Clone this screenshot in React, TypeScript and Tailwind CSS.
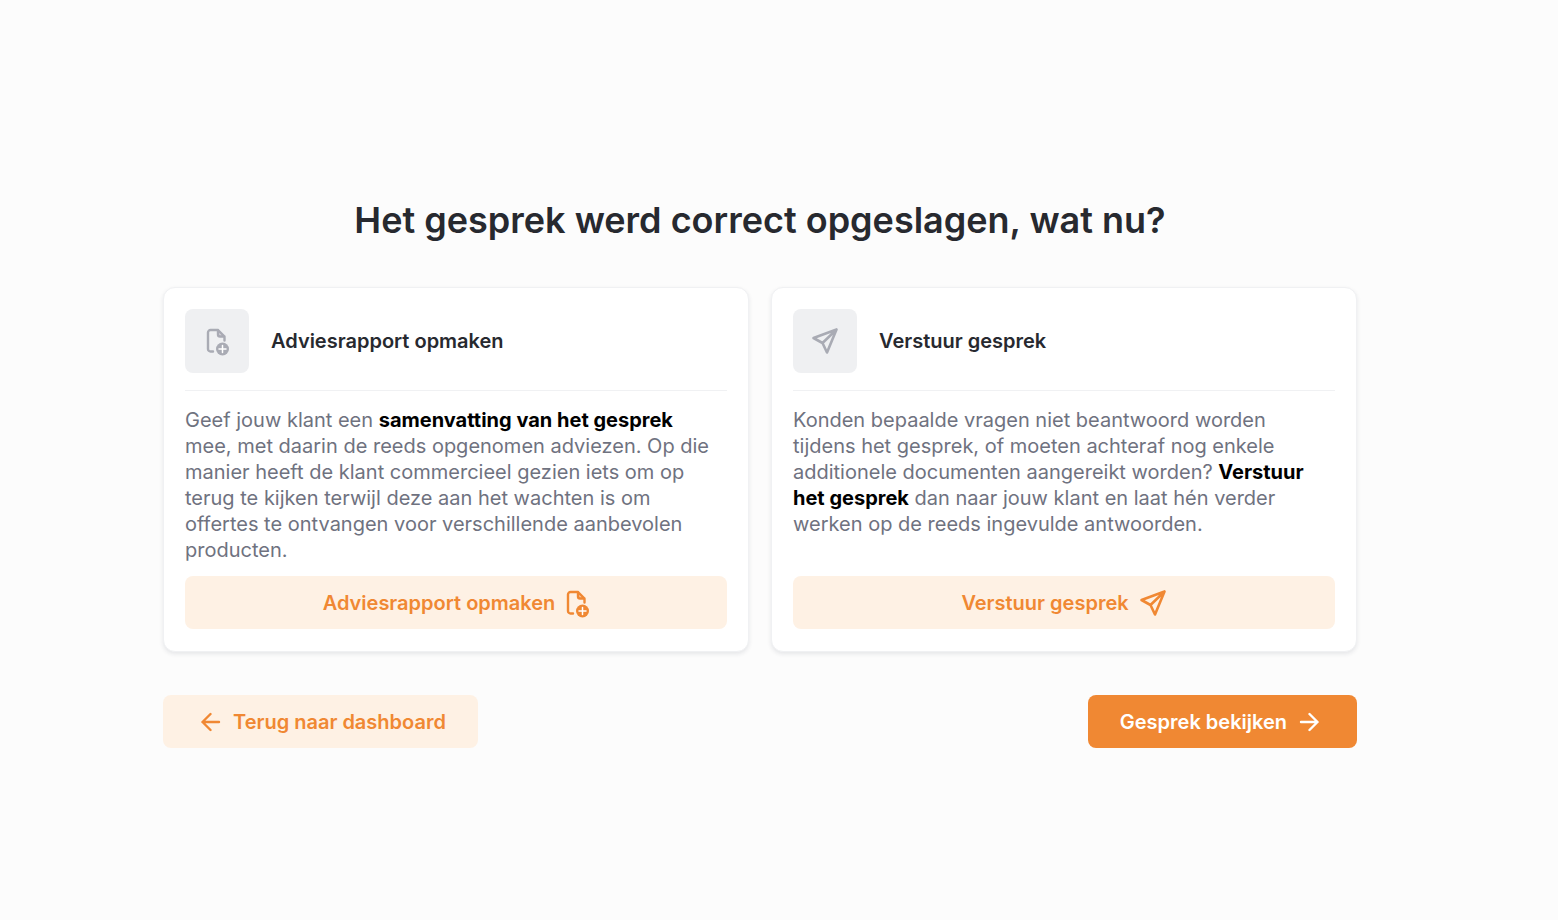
import React from "react";

const FileAddIcon = ({ className }: { className?: string }) => (
    <svg
        xmlns="http://www.w3.org/2000/svg"
        fill="none"
        viewBox="-1 -2 24 30"
        className={className}
        aria-hidden="true"
    >
        <path
            strokeLinecap="round"
            strokeLinejoin="round"
            strokeWidth="2.4"
            stroke="currentColor"
            d="M7 23.500H4.500A2.500 2.500 0 0 1 2 21V4.500A2.500 2.500 0 0 1 4.500 2H12l6.500 6.500v4M12 2v4.500a2 2 0 0 0 2 2h4.500"
        />
        <path d="M12 2v6.500h6.500z" fill="currentColor" fillOpacity="0.4" />
        <circle cx="16.500" cy="21" r="6.500" fill="currentColor" />
        <path
            strokeLinecap="round"
            strokeWidth="1.5"
            stroke="#fff"
            d="M16.500 17.500v7M13 21h7"
        />
    </svg>
);

const SendIcon = ({ className }: { className?: string }) => (
    <svg
        xmlns="http://www.w3.org/2000/svg"
        fill="none"
        viewBox="0 0 28 28"
        strokeWidth="2.6"
        stroke="currentColor"
        strokeLinecap="round"
        strokeLinejoin="round"
        className={className}
        aria-hidden="true"
    >
        <path d="M25.500 2.500 2.500 11l9 5 4.500 9.500zM25.500 2.500 11.500 16" />
    </svg>
);

const ArrowIcon = ({ className }: { className?: string }) => (
    <svg
        xmlns="http://www.w3.org/2000/svg"
        fill="none"
        viewBox="0 0 20 20"
        strokeWidth="2.4"
        stroke="currentColor"
        strokeLinecap="round"
        strokeLinejoin="round"
        className={className}
        aria-hidden="true"
    >
        <path d="M2 10h16.500M10.500 2l8 8-8 8" />
    </svg>
);

const CARDS = [
    {
        title: "Adviesrapport opmaken",
        icon: FileAddIcon,
        iconClass: "w-6 h-[30px]",
        description: (
            <>
                Geef jouw klant een{" "}
                <strong className="font-bold text-black">
                    samenvatting van het gesprek
                </strong>{" "}
                mee, met daarin de reeds opgenomen adviezen. Op die manier heeft
                de klant commercieel gezien iets om op terug te kijken terwijl
                deze aan het wachten is om offertes te ontvangen voor
                verschillende aanbevolen producten.
            </>
        ),
    },
    {
        title: "Verstuur gesprek",
        icon: SendIcon,
        iconClass: "size-7",
        description: (
            <>
                Konden bepaalde vragen niet beantwoord worden tijdens het
                gesprek, of moeten achteraf nog enkele additionele documenten
                aangereikt worden?{" "}
                <strong className="font-bold text-black">
                    Verstuur het gesprek
                </strong>{" "}
                dan naar jouw klant en laat hén verder werken op de reeds
                ingevulde antwoorden.
            </>
        ),
    },
];

const App = () => {
    return (
        <main className="min-h-screen bg-[#fcfcfc] pt-[196px] pb-16 pl-6 pr-[62px] font-['Inter',sans-serif] text-[20px] text-[#27292f]">
            <div className="mx-auto w-full max-w-[1194px]">
                <h1 className="text-center text-[36px] leading-[48px] font-semibold">
                    Het gesprek werd correct opgeslagen, wat nu?
                </h1>
                <div className="mt-[43px] grid grid-cols-1 gap-[22px] lg:grid-cols-2">
                    {CARDS.map(({ title, icon: Icon, iconClass, description }) => (
                        <section
                            key={title}
                            className="flex flex-col rounded-xl border border-[#f0f1f3] bg-white px-[21px] pt-[21px] pb-[22px] shadow-[0_2px_4px_rgba(30,40,60,0.1)]"
                        >
                            <div className="flex items-center gap-[22px] border-b border-[#f0f1f3] pb-[17px]">
                                <div className="flex size-16 items-center justify-center rounded-lg bg-[#eff0f2] text-[#a9abb4]">
                                    <Icon className={iconClass} />
                                </div>
                                <h2 className="font-semibold">{title}</h2>
                            </div>
                            <p className="mt-4 mb-[13px] pr-2.5 leading-[26px] text-[#6f727f]">
                                {description}
                            </p>
                            <button
                                type="button"
                                className="mt-auto flex h-[53px] items-center justify-center gap-2.5 rounded-lg bg-[#fef1e4] font-semibold text-[#f08833]"
                            >
                                {title}
                                <Icon className={iconClass} />
                            </button>
                        </section>
                    ))}
                </div>
                <div className="mt-[43px] flex justify-between">
                    <button
                        type="button"
                        className="flex h-[53px] items-center gap-3 rounded-lg bg-[#fef1e4] pr-8 pl-[38px] font-semibold text-[#f08833]"
                    >
                        <ArrowIcon className="size-5 rotate-180" />
                        Terug naar dashboard
                    </button>
                    <button
                        type="button"
                        className="flex h-[53px] items-center gap-3 rounded-lg bg-[#f08833] pr-[38px] pl-8 font-semibold text-white"
                    >
                        Gesprek bekijken
                        <ArrowIcon className="size-5" />
                    </button>
                </div>
            </div>
        </main>
    );
};

export default App;
